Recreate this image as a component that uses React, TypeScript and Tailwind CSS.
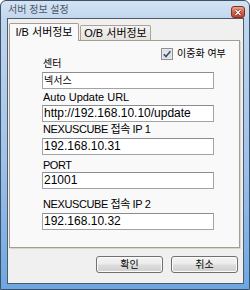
const KR = "font-['Liberation_Sans','Noto_Sans_CJK_KR',sans-serif]";

type Field = {
  label: React.ReactNode;
  value: string;
  labelCls: string;
  inputCls: string;
  valueCls?: string;
};

const fields: Field[] = [
  { label: "센터", value: "넥서스", labelCls: "mt-0 text-[10px]", inputCls: "mt-[2px]", valueCls: "text-[10px]" },
  { label: "Auto Update URL", value: "http://192.168.10.10/update", labelCls: "mt-[2px] text-[11px]", inputCls: "mt-[1px]" },
  { label: "NEXUSCUBE 접속 IP 1", value: "192.168.10.31", labelCls: "mt-[1px] text-[11px] tracking-[-0.4px]", inputCls: "mt-[2px]" },
  { label: "PORT", value: "21001", labelCls: "mt-[4px] text-[11px] tracking-[-0.5px]", inputCls: "mt-0" },
  { label: "NEXUSCUBE 접속 IP 2", value: "192.168.10.32", labelCls: "mt-[9px] text-[11px] tracking-[-0.4px]", inputCls: "mt-[2px]" },
];

function CheckBox() {
  return (
    <svg width="12" height="12" viewBox="0 0 12 12">
      <rect x="0.5" y="0.5" width="11" height="11" fill="#f6f6f6" stroke="#8e8f8f" />
      <rect x="2" y="2" width="8" height="8" fill="#e4e6ea" stroke="#c5c8cf" strokeWidth="0.6" />
      <path d="M2.8 6.2 L5 8.6 L9.4 3.2" fill="none" stroke="#3a4e7c" strokeWidth="1.6" />
    </svg>
  );
}

function CloseButton() {
  return (
    <div className="w-[14px] h-[12px] rounded-[3px] border border-[#7d3222] bg-[linear-gradient(to_bottom,#eaa48f,#d2644a_50%,#c0432a)] flex items-center justify-center">
      <svg width="8" height="7" viewBox="0 0 8 7">
        <path d="M1.5 1 L6.5 6 M6.5 1 L1.5 6" stroke="#5a2015" strokeWidth="2.4" />
        <path d="M1.5 1 L6.5 6 M6.5 1 L1.5 6" stroke="#ffffff" strokeWidth="1.3" />
      </svg>
    </div>
  );
}

export default function App() {
  return (
    <div className={`w-[250px] h-[290px] flex flex-col border border-[#3b5269] rounded-t-[6px] bg-[linear-gradient(to_bottom,#d4e3f3_0px,#c1d6ee_18px,#9fc2ea_55%,#6ea6e2_100%)] pl-[6px] pr-[5px] pb-[5px] ${KR}`}>
      {/* title bar */}
      <div className="h-[17px] -ml-[6px] -mr-[5px] flex items-start justify-between">
        <div className="pl-[7px] pt-[2px] text-[10px] leading-[13px] text-[#4b5766]">서버 정보 설정</div>
        <div className="pt-[5px] pr-[4px]">
          <CloseButton />
        </div>
      </div>

      {/* client area */}
      <div className="flex-1 border border-[#4e5a66] bg-[#f0f0f0] flex flex-col">
        <div className="pt-[4px] pl-[1px] flex items-end">
          <div className="relative z-10 -mb-px w-[70px] h-[18px] border border-b-0 border-[#a39d94] rounded-t-[2px] bg-[#f9f9f9] flex items-center justify-center text-[11px] text-black">
            I/B 서버정보
          </div>
          <div className="ml-[1px] w-[71px] h-[15px] border border-b-0 border-[#a9a39a] rounded-t-[2px] bg-[linear-gradient(to_bottom,#f4f3f1,#e6e3df)] flex items-center justify-center text-[11px] text-black">
            O/B 서버정보
          </div>
        </div>

        {/* tab panel */}
        <div className="ml-[1px] w-[231px] h-[208px] border border-[#a39d94] bg-[#f9f9f9] shadow-[1px_1px_0_#d9d6d1] pl-[32px] pt-[7px] flex flex-col">
          <div className="ml-[119px] h-[12px] -mb-[3px] flex items-center gap-[4px]">
            <CheckBox />
            <span className="text-[10px] leading-[12px] text-black">이중화 여부</span>
          </div>
          {fields.map((f, i) => (
            <div key={i} className="flex flex-col">
              <div className={`ml-[1px] h-[13px] leading-[13px] text-black ${f.labelCls}`}>{f.label}</div>
              <div
                className={`w-[172px] h-[17px] border border-[#a0a3a8] border-t-[#8a8d93] bg-white pl-px flex items-center text-[12px] leading-[15px] text-black ${f.inputCls}`}
              >
                <span className={f.valueCls}>{f.value}</span>
              </div>
            </div>
          ))}
        </div>

        {/* buttons */}
        <div className="mt-[8px] pr-[5px] flex justify-end gap-[8px]">
          {["확인", "취소"].map((t) => (
            <button
              key={t}
              className="w-[67px] h-[17px] rounded-[3px] border border-[#707070] bg-[linear-gradient(to_bottom,#f4f4f4,#ebebeb_48%,#dddddd_52%,#cfcfcf)] shadow-[inset_0_0_0_1px_#fbfbfb] flex items-center justify-center text-[10px] leading-[12px] text-black"
            >
              {t}
            </button>
          ))}
        </div>
      </div>
    </div>
  );
}
